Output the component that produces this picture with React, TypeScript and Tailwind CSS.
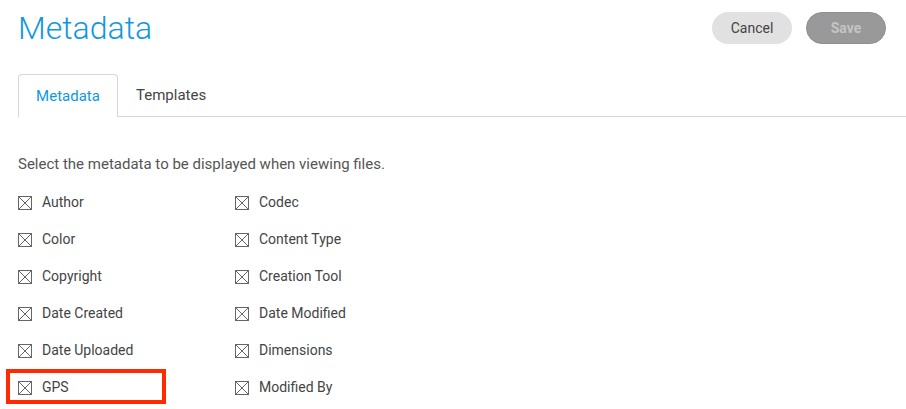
import React from 'react';

const LEFT = ['Author', 'Color', 'Copyright', 'Date Created', 'Date Uploaded', 'GPS'];
const RIGHT = ['Codec', 'Content Type', 'Creation Tool', 'Date Modified', 'Dimensions', 'Modified By'];

const CrossBox: React.FC = () => (
  <svg width="14" height="14" viewBox="0 0 14 14" className="shrink-0">
    <rect x="0.5" y="0.5" width="13" height="13" fill="none" stroke="#666" strokeWidth="1" />
    <path d="M1 1 L13 13 M13 1 L1 13" stroke="#666" strokeWidth="1" />
  </svg>
);

const Item: React.FC<{ label: string; flagged?: boolean }> = ({ label, flagged }) => (
  <div className="relative flex items-center gap-[10px] h-[37px]">
    <CrossBox />
    <span className="text-[14px] text-[#444]">{label}</span>
    {flagged && (
      <div className="absolute left-[-12px] top-[0px] w-[160px] h-[35px] border-[4px] border-[#ff2a00]"></div>
    )}
  </div>
);

const App: React.FC = () => {
  return (
    <div className="w-[906px] h-[409px] overflow-hidden bg-white font-['Roboto',sans-serif]">
      <header className="flex items-start justify-between pl-[18px] pr-[20px] pt-[8px]">
        <h1 className="text-[32px] font-light leading-[40px] text-[#1097e3]">Metadata</h1>
        <div className="flex gap-[14px] pt-[4px]">
          <button className="w-[80px] h-[32px] rounded-full bg-[#e1e1e1] text-[14px] text-[#444]">Cancel</button>
          <button className="w-[80px] h-[32px] rounded-full bg-[#999] border border-[#8f8f8f] text-[14px] font-bold text-[#c4c4c4]">Save</button>
        </div>
      </header>

      <nav className="mt-[26px] ml-[18px] flex border-b border-[#d6d6d6] h-[43px]">
        <div className="w-[100px] -mb-px flex items-center justify-center rounded-t-[4px] border border-b-0 border-[#d6d6d6] bg-white text-[15px] text-[#1097e3]">
          Metadata
        </div>
        <div className="px-[18px] flex items-center text-[15px] text-[#444]">Templates</div>
      </nav>

      <section className="pl-[18px] pt-[36px]">
        <p className="text-[15px] text-[#555] leading-[22px] mb-[9px]">Select the metadata to be displayed when viewing files.</p>
        <div className="grid grid-cols-[217px_200px]">
          <div className="flex flex-col">
            {LEFT.map(l => <Item key={l} label={l} flagged={l === 'GPS'} />)}
          </div>
          <div className="flex flex-col">
            {RIGHT.map(l => <Item key={l} label={l} />)}
          </div>
        </div>
      </section>
    </div>
  );
};

export default App;
